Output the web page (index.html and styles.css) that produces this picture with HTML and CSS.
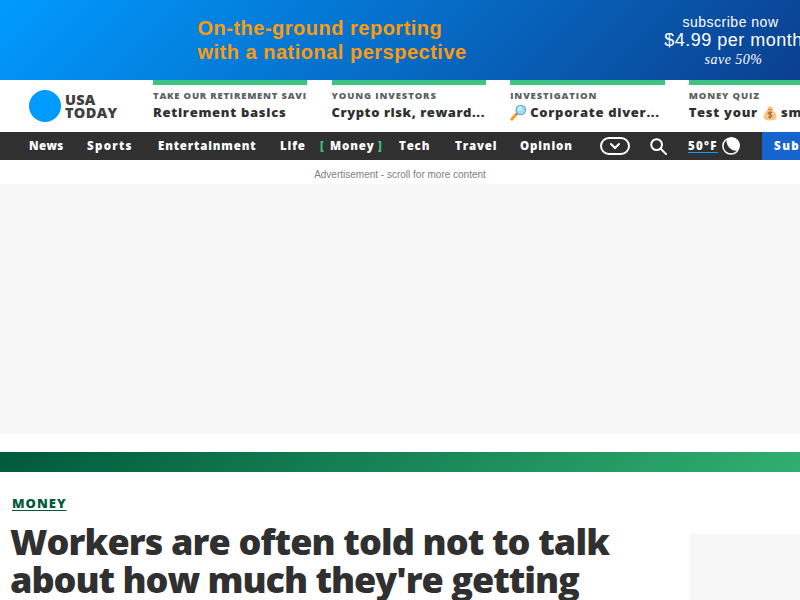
FILE: index.html
```html
<!DOCTYPE html>
<html lang="en">
<head>
<meta charset="utf-8">
<title>USA TODAY</title>
<link rel="stylesheet" href="styles.css">
</head>
<body>
<a class="promo">
  <span class="promo-copy">On-the-ground reporting<br>with a national perspective</span>
  <span class="promo-offer"><span class="offer-now">subscribe now</span><span class="offer-price">$4.99 per month</span><em class="offer-save">save 50%</em></span>
</a>
<header class="masthead">
  <a class="logo"><span class="logo-dot"></span><span class="logo-name"><span class="logo-usa">USA</span><span class="logo-today">TODAY</span></span></a>
  <div class="stories">
    <a class="story"><span class="kicker k1">TAKE OUR RETIREMENT SAVI</span><span class="title t1">Retirement basics</span></a>
    <a class="story"><span class="kicker">YOUNG INVESTORS</span><span class="title t2">Crypto risk, reward...</span></a>
    <a class="story"><span class="kicker">INVESTIGATION</span><span class="title t3"><svg class="emoji" width="17" height="17" viewBox="0 0 17 17"><path d="M1.8 15.2l5-5.4" stroke="#f59b22" stroke-width="3" stroke-linecap="round"/><path d="M6.2 10.5l1.6-1.7" stroke="#77858d" stroke-width="1.5"/><circle cx="10.8" cy="6" r="4.8" fill="#9cdcf8" stroke="#69a5c8" stroke-width="1.1"/><circle cx="9.8" cy="4.8" r="2.2" fill="#c2effc"/></svg>Corporate diver...</span></a>
    <a class="story"><span class="kicker">MONEY QUIZ</span><span class="title t4">Test your <svg class="emoji bag" width="14" height="16" viewBox="0 0 14 16"><path d="M4.4 1.5Q6 2.2 7 1Q8 2.2 10 1.5L8.8 4.5Q13.5 8 13.5 12Q13 15.5 7 15.5T.5 12Q.5 8 5.2 4.5Z" fill="#f9c580"/><path d="M4.6 4.7h5" stroke="#d57c3d" stroke-width="1"/><path d="M9 7.8Q7 6.5 5.2 7.9C4.2 10 9 8.9 9 11.3Q7.2 13.3 5 11.9M7 6.2v7.3" fill="none" stroke="#8d5932" stroke-width=".9"/></svg> smarts</span></a>
  </div>
</header>
<nav class="nav">
  <a class="news">News</a><a class="sports">Sports</a><a>Entertainment</a><a>Life</a><a class="current"><b>[</b><span>Money</span><b>]</b></a><a>Tech</a><a>Travel</a><a>Opinion</a>
  <svg class="more" width="30" height="18" viewBox="0 0 30 18"><rect x="1" y="1" width="28" height="16" rx="8"/><path d="M11 7l4 4 4-4"/></svg>
  <svg class="search" width="17" height="17" viewBox="0 0 17 17"><circle cx="6.6" cy="6.6" r="5.4"/><path d="M10.5 10.5l5.6 5.6"/></svg>
  <a class="weather"><span>50°F</span></a>
  <svg class="moon" width="18" height="18" viewBox="0 0 18 18"><circle class="ring" cx="9" cy="9" r="8.1"/><path class="lit" d="M4.6 2.2C3.4 8.2 9.2 14.6 15.2 13.8A7.8 7.8 0 0 0 4.6 2.2Z"/></svg>
  <a class="subscribe">Subscribe</a>
</nav>
<div class="ad-label">Advertisement - scroll for more content</div>
<div class="ad"></div>
<div class="section-bar"></div>
<main class="article">
  <div class="lead">
    <a class="section">MONEY</a>
    <h1><span class="h-a">Workers are often told not to talk</span><span class="h-b">about how much they're getting</span></h1>
  </div>
  <aside class="rail"></aside>
</main>
</body>
</html>
```
FILE: styles.css
```css
* { box-sizing: border-box; }
body { display: flex; flex-direction: column; margin: 0; height: 600px; overflow: hidden; background: #fff; color: #303030; font-family: "Open Sans", "Noto Sans", sans-serif; }
.promo { display: flex; flex: none; height: 80px; padding-left: 197.5px; background: linear-gradient(135deg, #009bff, #0b3f8f); font-family: "Liberation Sans", Arial, sans-serif; overflow: hidden; }
.promo-copy { flex: none; width: 466.5px; padding-top: 16px; color: #ff9b0b; font-size: 20px; line-height: 24px; font-weight: 700; letter-spacing: .5px; white-space: nowrap; }
.promo-offer { flex: none; display: flex; flex-direction: column; align-items: center; width: 139px; padding-top: 13px; color: #fff; white-space: nowrap; }
.offer-now { font-size: 14px; line-height: 18px; letter-spacing: .5px; margin-right: 6px; }
.offer-price { font-size: 18px; line-height: 18px; letter-spacing: .5px; }
.offer-save { padding-top: 1px; font: italic 14px/20px "Liberation Serif", serif; letter-spacing: .5px; }
.masthead { display: flex; flex: none; height: 52px; padding-left: 29px; overflow: hidden; }
.logo { flex: none; display: flex; width: 124px; padding-top: 10px; gap: 4px; }
.logo-dot { width: 32px; height: 32px; border-radius: 50%; background: #009bff; }
.logo-name { display: flex; flex-direction: column; padding-top: 3px; font-size: 14.5px; font-weight: 800; line-height: 13px; color: #404040; }
.logo-usa { letter-spacing: .2px; }
.logo-today { letter-spacing: .3px; }
.stories { flex: none; display: grid; grid-template-columns: repeat(4, 154.4px); column-gap: 24.2px; }
.story { display: flex; flex-direction: column; border-top: 5px solid #3fc380; white-space: nowrap; overflow: hidden; }
.kicker { padding-top: 4px; height: 17px; font-size: 9.5px; line-height: 13px; font-weight: 800; color: #606060; letter-spacing: .87px; }
.k1 { letter-spacing: .77px; }
.title { font-size: 13px; line-height: 20px; font-weight: 800; letter-spacing: .7px; }
.t2 { letter-spacing: .55px; }
.emoji { margin-right: 3px; fill: none; vertical-align: -4px; }
.bag { margin: 0 0 0 1px; }
.nav { display: grid; flex: none; grid-template-columns: 58px 71px 122px 40px 79px 56px 65px 80px 50px 38px 34px 40px 38px; height: 28px; padding-left: 29px; align-items: center; background: #303030; color: #fff; font-size: 11.5px; line-height: 28px; font-weight: 800; letter-spacing: .85px; white-space: nowrap; }
.nav .news { letter-spacing: .4px; }
.nav .sports { letter-spacing: 1.3px; }
.current { display: flex; }
.current b { width: 10px; color: #3fc380; }
.current span { width: 48px; }
.nav svg { fill: none; stroke: #fff; stroke-width: 2; stroke-linecap: round; }
.weather { line-height: 12px; }
.weather span { display: block; width: 30px; border-bottom: 1px solid #1b98f5; letter-spacing: 1.3px; }
.nav .ring { stroke-width: 1.5; }
.nav .lit { fill: #fff; stroke: none; }
.subscribe { height: 28px; padding-left: 12px; background: #1665cf; letter-spacing: 1.5px; overflow: hidden; }
.ad-label { flex: none; height: 24px; padding-top: 5px; text-align: center; font: 10px/19px "Liberation Sans", Arial, sans-serif; color: #808080; }
.ad { flex: none; height: 250px; background: #f7f7f7; }
.section-bar { flex: none; height: 20px; margin-top: 18px; background: linear-gradient(135deg, #005a3c, #30af70); }
.article { display: flex; justify-content: space-between; padding-left: 10px; height: 128px; overflow: hidden; }
.lead { padding-top: 22px; }
.section { display: block; height: 29px; margin-left: 2px; color: #005a3c; font-size: 13px; line-height: 18px; font-weight: 800; letter-spacing: 1px; text-decoration: underline 1px; text-underline-offset: 2px; }
h1 { margin: 0; font-size: 36px; line-height: 38px; font-weight: 800; }
h1 span { display: block; white-space: nowrap; }
.h-a { letter-spacing: -.88px; }
.h-b { letter-spacing: -1.02px; }
.rail { width: 110px; margin-top: 62px; background: #f7f7f7; }
```
